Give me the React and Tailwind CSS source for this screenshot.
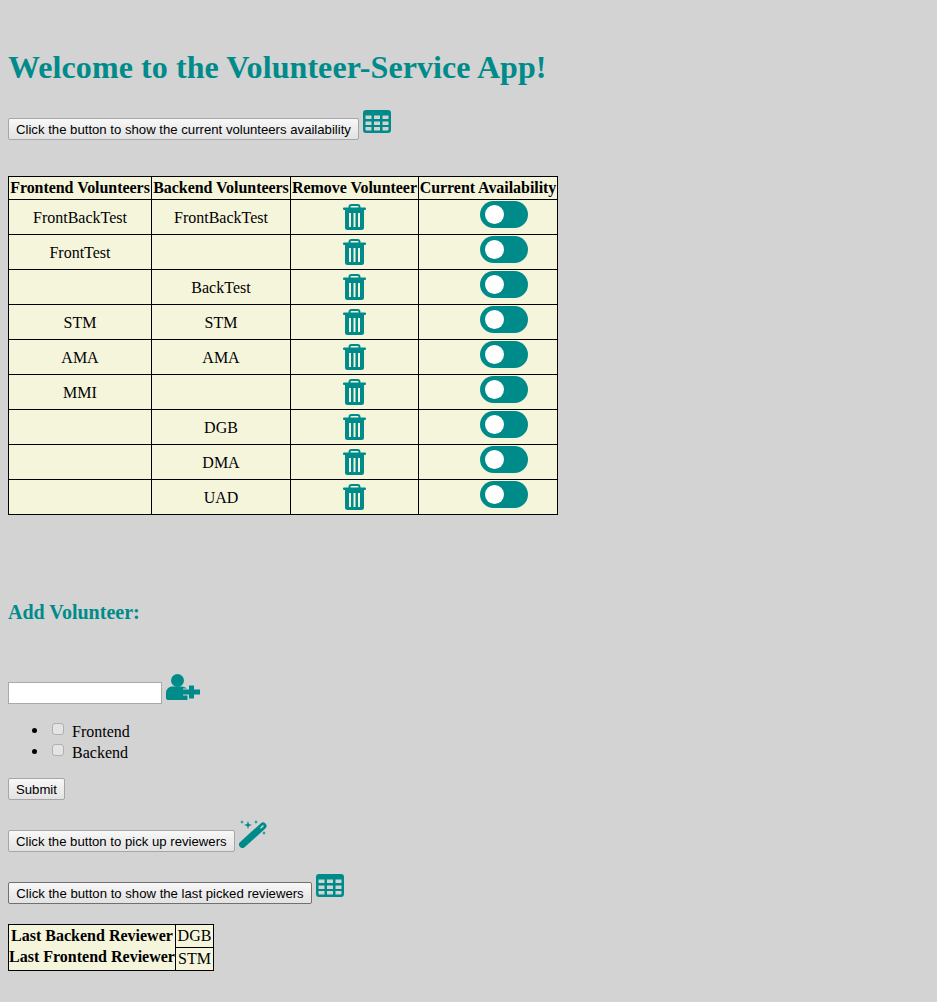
import React from 'react';

const volunteers = [
  ['FrontBackTest', 'FrontBackTest'],
  ['FrontTest', ''],
  ['', 'BackTest'],
  ['STM', 'STM'],
  ['AMA', 'AMA'],
  ['MMI', ''],
  ['', 'DGB'],
  ['', 'DMA'],
  ['', 'UAD'],
];

const btn = "h-[22px] px-[7px] pt-px bg-linear-to-b from-[#f8f8f8] to-[#e2e2e2] border rounded-[2px] font-['Liberation_Sans',sans-serif] text-[13.17px] text-black";

const TableIcon = () => (
  <svg viewBox="0 0 28 23" className="w-[28px] h-[23px] mb-[7px] text-[#008b8b]">
    <path
      fill="currentColor"
      fillRule="evenodd"
      d="M3 0h22a3 3 0 0 1 3 3v17a3 3 0 0 1-3 3H3a3 3 0 0 1-3-3V3a3 3 0 0 1 3-3zM2.500 5.500V9h6V5.500zm8.500 0V9h6V5.500zm8.500 0V9h6V5.500zM2.500 11.500V15h6v-3.500zm8.500 0V15h6v-3.500zm8.500 0V15h6v-3.500zM2.500 17v2.500a1 1 0 0 0 1 1h5V17zm8.500 0v3.500h6V17zm8.500 0v3.500h5a1 1 0 0 0 1-1V17z"
    />
  </svg>
);

const TrashIcon = () => (
  <svg viewBox="0 0 23 26" className="inline-block w-[23px] h-[26px] text-[#008b8b]">
    <path d="M6.500 4V3a2 2 0 0 1 2-2h6a2 2 0 0 1 2 2v1" fill="none" stroke="currentColor" strokeWidth="2" />
    <rect x="0" y="3.500" width="23" height="2.500" rx="1" fill="currentColor" />
    <path
      fill="currentColor"
      fillRule="evenodd"
      d="M2 6h19v17.500a2.500 2.500 0 0 1-2.500 2.500h-14A2.500 2.500 0 0 1 2 23.500zM6 9v14h2V9zm4.500 0v14h2V9zm4.500 0v14h2V9z"
    />
  </svg>
);

const UserPlusIcon = () => (
  <svg viewBox="0 0 35 27" className="w-[35px] h-[27px] mb-[4px] text-[#008b8b]">
    <circle cx="11.500" cy="7.500" r="6.500" fill="currentColor" />
    <path d="M0 24v-4c0-4 3-6.500 6.500-6.500h9c3 0 5 1.500 6 3.500v10H2a2 2 0 0 1-2-2z" fill="currentColor" />
    <path d="M17 19h17M25.500 13v13" stroke="#d3d3d3" strokeWidth="7" />
    <path d="M17 19h17M25.500 12.500v13" stroke="currentColor" strokeWidth="5" />
  </svg>
);

const WandIcon = () => (
  <svg viewBox="0 0 28 28" className="w-[28px] h-[28px] mb-[4px] text-[#008b8b]">
    <path d="M3.500 24.500L24 6" stroke="currentColor" strokeWidth="7" strokeLinecap="round" />
    <path d="M21.500 8.200L24.500 5.500" stroke="#d3d3d3" strokeWidth="1.500" />
    <g fill="currentColor">
      <path d="M9 1l1 3 3 1-3 1-1 3-1-3-3-1 3-1z" />
      <path d="M3 0l.6 1.400L5 2l-1.400.6L3 4l-.6-1.400L1 2l1.400-.6z" />
      <path d="M17 0l.6 1.400L19 2l-1.400.6L17 4l-.6-1.400L15 2l1.400-.6z" />
      <path d="M25 11l.6 1.400L27 13l-1.400.6L25 15l-.6-1.400L23 13l1.400-.6z" />
    </g>
  </svg>
);

const Toggle = () => (
  <span className="inline-block w-[48px] h-[27px] ml-[32px] rounded-full bg-[#008b8b] align-middle relative">
    <span className="absolute left-[5px] top-[4px] w-[19px] h-[19px] rounded-full bg-white"></span>
  </span>
);

const Check = () => (
  <input type="checkbox" className="w-[12px] h-[12px] appearance-none bg-[#e4e4e4] border border-[#b0b0b0] rounded-[3px] -mt-[4px]" />
);

export default function App() {
  return (
    <div className="min-h-[1002px] bg-[#d3d3d3] font-['Liberation_Serif',serif] text-[16px] text-black px-[8px] pt-[49px]">
      <h1 className="text-[32px] font-bold leading-[37px] tracking-[0.08px] text-[#008b8b]">Welcome to the Volunteer-Service App!</h1>

      <div className="mt-[22px] flex items-end gap-[4px] h-[32px]">
        <button className={`${btn} border-[#a6a6a6]`}>Click the button to show the current volunteers availability</button>
        <TableIcon />
      </div>

      <table className="mt-[36px] w-[550px] table-fixed border-collapse bg-[#f5f5dc] border border-black">
        <thead>
          <tr className="h-[23px]">
            <th className="w-[143px] border border-black p-0 leading-[18px] tracking-[-0.05px]">Frontend Volunteers</th>
            <th className="w-[139px] border border-black p-0 leading-[18px] tracking-[-0.05px]">Backend Volunteers</th>
            <th className="w-[128px] border border-black p-0 leading-[18px] tracking-[-0.05px]">Remove Volunteer</th>
            <th className="border border-black p-0 leading-[18px] tracking-[-0.05px]">Current Availability</th>
          </tr>
        </thead>
        <tbody>
          {volunteers.map((v, i) => (
            <tr key={i} className="h-[35px]">
              <td className="border border-black text-center pt-px">{v[0]}</td>
              <td className="border border-black text-center pt-px">{v[1]}</td>
              <td className="border border-black text-center">
                <TrashIcon />
              </td>
              <td className="border border-black text-center pb-[5px]"><Toggle /></td>
            </tr>
          ))}
        </tbody>
      </table>

      <h3 className="mt-[86px] text-[20px] font-bold leading-[22px] text-[#008b8b]">Add Volunteer:</h3>

      <div className="mt-[50px] flex items-end gap-[4px]">
        <input type="text" className="w-[154px] h-[22px] bg-white border border-[#a9a9a9]" />
        <UserPlusIcon />
      </div>

      <ul className="mt-[15px] list-disc pl-[40px] leading-[21px]">
        <li className="h-[21px]">
          <label className="flex items-center gap-[8px] ml-[4px] h-[21px]">
            <Check />
            Frontend
          </label>
        </li>
        <li className="h-[21px]">
          <label className="flex items-center gap-[8px] ml-[4px] h-[21px]">
            <Check />
            Backend
          </label>
        </li>
      </ul>

      <button className={`${btn} border-[#a6a6a6] mt-[17px] block`}>Submit</button>

      <div className="mt-[20px] flex items-end gap-[4px] h-[32px]">
        <button className={`${btn} border-[#a6a6a6]`}>Click the button to pick up reviewers</button>
        <WandIcon />
      </div>

      <div className="mt-[20px] flex items-end gap-[4px] h-[32px]">
        <button className={`${btn} border-[#707070] w-[304px]`}>Click the button to show the last picked reviewers</button>
        <TableIcon />
      </div>

      <table className="mt-[20px] w-[206px] table-fixed border-collapse bg-[#f5f5dc] border border-black">
        <tbody>
          <tr className="h-[23px]">
            <th className="w-[167px] p-0 leading-[18px]">Last Backend Reviewer</th>
            <td className="border border-black p-0 text-center leading-[18px]">DGB</td>
          </tr>
          <tr className="h-[23px]">
            <th className="p-0 pb-[3px] leading-[18px]">Last Frontend Reviewer</th>
            <td className="border border-black p-0 text-center leading-[18px]">STM</td>
          </tr>
        </tbody>
      </table>
    </div>
  );
}
